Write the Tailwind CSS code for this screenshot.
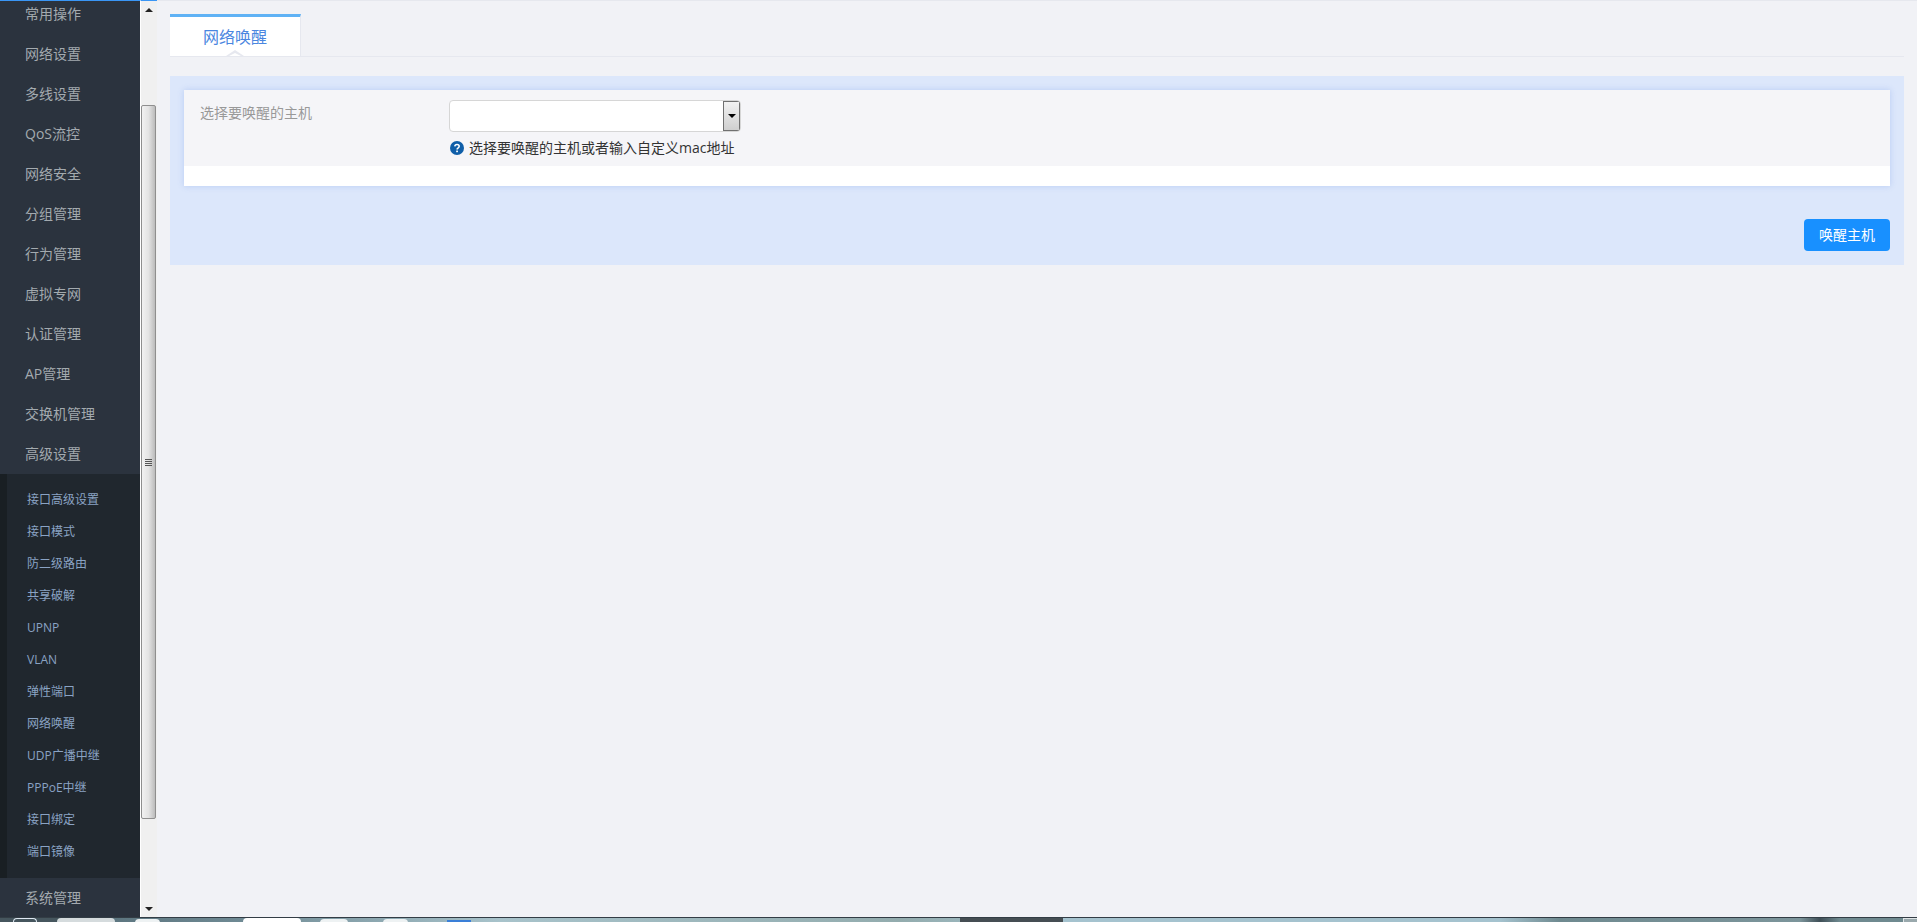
<!DOCTYPE html>
<html lang="zh" class="overflow-hidden">
<head>
<meta charset="utf-8">
<script src="https://cdn.jsdelivr.net/npm/@tailwindcss/browser@4"></script>
<title>网络唤醒</title>
</head>
<body class="h-[922px] w-[1917px] overflow-hidden bg-[#f1f2f6] font-['Open_Sans','Noto_Sans_CJK_SC',sans-serif]">
<div class="flex h-[917px] w-full">
  <!-- sidebar -->
  <nav class="h-full w-[140px] shrink-0 overflow-hidden border-t border-[#3a96f5] bg-[#2b333e] text-sm text-[#a3aaaf]">
    <ul class="-mt-[7px]">
      <li class="flex h-10 items-center pl-[25px]">常用操作</li>
      <li class="flex h-10 items-center pl-[25px]">网络设置</li>
      <li class="flex h-10 items-center pl-[25px]">多线设置</li>
      <li class="flex h-10 items-center pl-[25px]">QoS流控</li>
      <li class="flex h-10 items-center pl-[25px]">网络安全</li>
      <li class="flex h-10 items-center pl-[25px]">分组管理</li>
      <li class="flex h-10 items-center pl-[25px]">行为管理</li>
      <li class="flex h-10 items-center pl-[25px]">虚拟专网</li>
      <li class="flex h-10 items-center pl-[25px]">认证管理</li>
      <li class="flex h-10 items-center pl-[25px]">AP管理</li>
      <li class="flex h-10 items-center pl-[25px]">交换机管理</li>
      <li class="flex h-10 items-center pl-[25px]">高级设置</li>
      <li>
        <ul class="border-l-[7px] border-[#191f23] bg-[#20272e] py-[10px] text-xs text-[#8aa3c4]">
          <li class="flex h-8 items-center pl-5">接口高级设置</li>
          <li class="flex h-8 items-center pl-5">接口模式</li>
          <li class="flex h-8 items-center pl-5">防二级路由</li>
          <li class="flex h-8 items-center pl-5">共享破解</li>
          <li class="flex h-8 items-center pl-5">UPNP</li>
          <li class="flex h-8 items-center pl-5">VLAN</li>
          <li class="flex h-8 items-center pl-5">弹性端口</li>
          <li class="flex h-8 items-center pl-5">网络唤醒</li>
          <li class="flex h-8 items-center pl-5">UDP广播中继</li>
          <li class="flex h-8 items-center pl-5">PPPoE中继</li>
          <li class="flex h-8 items-center pl-5">接口绑定</li>
          <li class="flex h-8 items-center pl-5">端口镜像</li>
        </ul>
      </li>
      <li class="flex h-10 items-center pl-[25px]">系统管理</li>
    </ul>
  </nav>
  <!-- scrollbar -->
  <div class="flex h-full w-[17px] shrink-0 flex-col border-t border-l border-t-[#3a96f5] border-l-white bg-[#f0f0f0]">
    <div class="flex h-[17px] items-center justify-center">
      <div class="h-0 w-0 border-x-[4px] border-b-[4px] border-x-transparent border-b-[#222]"></div>
    </div>
    <div class="mt-[87px] flex h-[714px] w-[15px] items-center justify-center rounded-[2px] border border-[#8f8f8f] bg-gradient-to-r from-[#f2f2f2] via-[#e4e4e4] to-[#bcbcbc]">
      <div class="flex w-[7px] flex-col gap-px">
        <div class="h-px bg-[#555]"></div><div class="h-px bg-[#555]"></div><div class="h-px bg-[#555]"></div><div class="h-px bg-[#555]"></div>
      </div>
    </div>
    <div class="mt-auto flex h-[17px] items-center justify-center">
      <div class="h-0 w-0 border-x-[4px] border-t-[4px] border-x-transparent border-t-[#222]"></div>
    </div>
  </div>
  <!-- content -->
  <main class="min-w-0 flex-1 border-t border-[#e6e8ee] pl-[13px] pr-[13px]">
    <div class="mt-[13px] flex h-[43px] border-b border-[#e6e8ef]">
      <div class="relative flex h-[42px] w-[131px] items-center justify-center border-t-[3px] border-r border-t-[#5fb2f5] border-r-[#e6e8ef] bg-white text-base text-[#4a86e0]">
        网络唤醒
        <div class="absolute bottom-0 left-[56px] h-0 w-0 border-x-[9px] border-b-[6px] border-x-transparent border-b-[#e6e8ef]"></div>
        <div class="absolute bottom-0 left-[59px] h-0 w-0 border-x-[6px] border-b-[3px] border-x-transparent border-b-white"></div>
      </div>
    </div>
    <section class="mt-[19px] h-[189px] bg-[#dce7fb] px-[14px] pt-[14px]">
      <div class="h-[96px] bg-white shadow-[0_0_6px_rgba(100,140,230,0.3)]">
        <div class="flex h-[76px] bg-[#f5f5f8] pt-[10px]">
          <label class="w-[265px] shrink-0 pl-4 pt-[3px] text-sm leading-[20px] text-[#999]">选择要唤醒的主机</label>
          <div>
            <div class="flex h-[32px] w-[292px] overflow-hidden rounded border border-[#d6d6d6] bg-white">
              <div class="flex-1"></div>
              <div class="flex w-[17px] items-center justify-center border border-[#707070] bg-gradient-to-b from-[#f2f2f2] to-[#cfcfcf]">
                <div class="h-0 w-0 border-x-[4px] border-t-[4px] border-x-transparent border-t-black"></div>
              </div>
            </div>
            <div class="mt-[6px] flex items-center gap-[5px] pl-[1px] text-sm leading-[20px] text-[#333]">
              <svg class="h-[14px] w-[14px] shrink-0" viewBox="0 0 12 12"><circle cx="6" cy="6" r="6" fill="#0f5ea8"/><path d="M4.1 4.6C4.2 3.5 5 3 6 3c1.1 0 1.9.6 1.9 1.6 0 .8-.5 1.2-1.1 1.6-.5.3-.7.5-.7 1.1" fill="none" stroke="#fff" stroke-width="1.3"/><rect x="5.3" y="8.2" width="1.5" height="1.4" fill="#fff"/></svg>
              <span>选择要唤醒的主机或者输入自定义mac地址</span>
            </div>
          </div>
        </div>
      </div>
      <div class="mt-[33px] flex justify-end">
        <button class="h-8 w-[86px] rounded bg-[#1890ff] text-sm text-white">唤醒主机</button>
      </div>
    </section>
  </main>
</div>
<!-- desktop taskbar strip cut off by the capture -->
<div class="relative h-[5px] w-full overflow-hidden border-t border-[#333d45] bg-[linear-gradient(to_right,#46565e_0,#46565e_57px,#5d7680_115px,#6f8a94_243px,#a8c3cb_500px,#93acae_900px,#a5c3cf_1063px,#a5c3cf_1500px,#6f8a90_1560px,#7c959b_1800px,#3f4f57_1820px,#6f8a90_1840px,#6f8a90_1917px)]">
  <div class="absolute left-[13px] top-0 h-full w-[24px] rounded-t-full border-t border-x border-[#dfe8f2]"></div>
  <div class="absolute left-[57px] top-0 h-full w-[58px] rounded-t-sm bg-[#d5dbdd]"></div>
  <div class="absolute left-[135px] top-[1px] h-full w-[25px] rounded-t-sm bg-[#eef2f3]"></div>
  <div class="absolute left-[243px] top-0 h-full w-[58px] rounded-t-sm bg-white"></div>
  <div class="absolute left-[320px] top-[1px] h-full w-[28px] rounded-t-sm bg-[#eef2f3]"></div>
  <div class="absolute left-[383px] top-[1px] h-full w-[25px] rounded-t-sm bg-[#eef2f3]"></div>
  <div class="absolute left-[447px] top-[2px] h-full w-[24px] bg-[#3a7fd8]"></div>
  <div class="absolute left-[960px] top-0 h-full w-[103px] bg-[#454e53]"></div>
  <div class="absolute left-[1903px] top-0 h-full w-[14px] border-l border-t border-[#dfe4e6] bg-[#9aa9ad]"></div>
</div>
</body>
</html>
